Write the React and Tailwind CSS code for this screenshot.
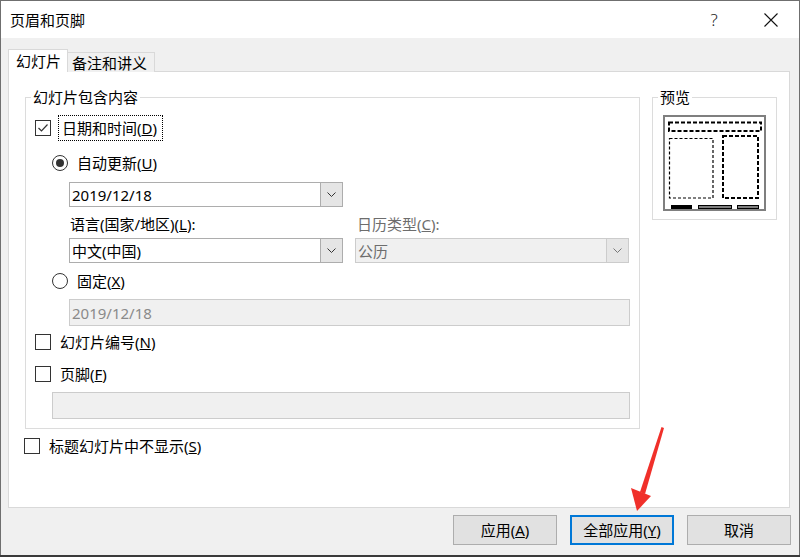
import React from "react";

// 页眉和页脚 对话框
function Check({ checked }) {
  return (
    <span className="w-[16px] h-[16px] border border-[#333] bg-white flex items-center justify-center shrink-0">
      {checked && (
        <svg width="12" height="12" viewBox="0 0 12 12">
          <polyline points="1.5,6 4.5,9 10.5,2.5" fill="none" stroke="#333" strokeWidth="1.2" />
        </svg>
      )}
    </span>
  );
}

function Radio({ checked }) {
  return (
    <span className="w-[16px] h-[16px] rounded-full border border-[#333] bg-white flex items-center justify-center shrink-0">
      {checked && <span className="w-[8px] h-[8px] rounded-full bg-[#333]" />}
    </span>
  );
}

function Chevron({ color = "#333" }) {
  return (
    <svg width="9" height="5" viewBox="0 0 9 5">
      <polyline points="0.5,0.5 4.5,4.5 8.5,0.5" fill="none" stroke={color} strokeWidth="1" />
    </svg>
  );
}

function Combo({ value, disabled }) {
  return (
    <div
      className={
        "w-[274px] h-[25px] border flex " +
        (disabled ? "bg-[#f0f0f0] border-[#cccccc] text-[#6d6d6d]" : "bg-white border-[#adadad]")
      }
    >
      <div className="flex-1 pl-[2px] flex items-center">{value}</div>
      <div
        className={
          "w-[22px] border-l flex items-center justify-center " +
          (disabled ? "bg-[#e6e6e6] border-[#cccccc]" : "bg-[#e5e5e5] border-[#adadad]")
        }
      >
        <Chevron color={disabled ? "#777" : "#333"} />
      </div>
    </div>
  );
}

function Preview() {
  return (
    <svg width="103" height="96" viewBox="0 0 103 96">
      <rect x="1" y="1" width="101" height="94" fill="#fff" stroke="#7f7f7f" strokeWidth="2" />
      <rect x="6" y="7.5" width="92" height="8.5" fill="none" stroke="#000" strokeWidth="2" strokeDasharray="4 2" />
      <rect x="6.5" y="23.5" width="43.5" height="59.5" fill="none" stroke="#000" strokeWidth="1.2" strokeDasharray="3 2" />
      <rect x="60" y="21" width="35" height="62" fill="none" stroke="#000" strokeWidth="2" strokeDasharray="4 2" />
      <rect x="8" y="90" width="21" height="4" fill="#000" />
      <rect x="35.5" y="90.5" width="33" height="3" fill="#7f7f7f" stroke="#000" strokeWidth="1" />
      <rect x="74.5" y="90.5" width="21" height="3" fill="#7f7f7f" stroke="#000" strokeWidth="1" />
    </svg>
  );
}

function Button({ children, focused }) {
  return (
    <button
      className={
        "w-[104px] h-[30px] bg-[#e1e1e1] flex items-center justify-center " +
        (focused ? "border-2 border-[#0078d7]" : "border border-[#adadad]")
      }
    >
      {children}
    </button>
  );
}

export default function App() {
  return (
    <div className="w-[800px] h-[557px] bg-[#3a3a3a] relative overflow-hidden font-['Noto_Sans','Noto_Sans_CJK_SC',sans-serif] text-[15px] leading-[20px] text-black">
      <div className="w-[800px] h-[555px] bg-[#f0f0f0] border-l border-r border-t border-[#6f6f6f] flex flex-col">
        {/* title bar */}
        <div className="h-[37px] bg-white flex items-center pl-[9px] shrink-0">
          <span className="flex-1">页眉和页脚</span>
          <span className="w-[20px] text-center text-[17px] font-light text-[#222] mr-[40px]">?</span>
          <svg width="14" height="14" viewBox="0 0 14 14" className="mr-[21px]">
            <path d="M0.5 0.5 L13.5 13.5 M13.5 0.5 L0.5 13.5" stroke="#111" strokeWidth="1.1" />
          </svg>
        </div>

        <div className="pl-[7px] pt-[12px] flex flex-col">
          {/* tabs */}
          <div className="h-[22px] flex items-end -mb-px relative z-10">
            <div className="w-[60px] h-[23px] bg-white border border-b-0 border-[#d9d9d9] pl-[7px] pt-[1px]">幻灯片</div>
            <div className="w-[87px] h-[20px] bg-[#f0f0f0] border border-l-0 border-b-0 border-[#d9d9d9] pl-[4px]">备注和讲义</div>
          </div>

          {/* panel */}
          <div className="w-[782px] h-[437px] bg-white border border-[#d9d9d9] pt-[15px] pl-[16px] flex flex-col">
            <div className="flex items-start gap-[12px]">
              <fieldset className="w-[615px] border border-[#dcdcdc]">
                <legend className="ml-[5px] px-[2px]">幻灯片包含内容</legend>

                <div className="pl-[9px] pb-[9px]">
                  <div className="h-[26px] mt-[8px] flex items-center">
                    <Check checked />
                    <span className="ml-[7px] h-[26px] w-[105px] border border-dotted border-black pl-[3px] flex items-center">
                      日期和时间(<span className="underline">D</span>)
                    </span>
                  </div>

                  <div className="h-[20px] mt-[12px] ml-[17px] flex items-center gap-[9px]">
                    <Radio checked />
                    <span>
                      自动更新(<span className="underline">U</span>)
                    </span>
                  </div>

                  <div className="mt-[9px] ml-[34px]">
                    <Combo value="2019/12/18" />
                  </div>

                  <div className="h-[20px] mt-[7px] ml-[34px] flex gap-[12px]">
                    <span className="w-[274px] pl-[1px]">
                      语言(国家/地区)(<span className="underline">L</span>):
                    </span>
                    <span className="w-[274px] pl-[2px] text-[#6d6d6d]">
                      日历类型(<span className="underline">C</span>):
                    </span>
                  </div>

                  <div className="mt-[4px] ml-[34px] flex gap-[12px]">
                    <Combo value="中文(中国)" />
                    <Combo value="公历" disabled />
                  </div>

                  <div className="h-[20px] mt-[8px] ml-[17px] flex items-center gap-[9px]">
                    <Radio />
                    <span>
                      固定(<span className="underline">X</span>)
                    </span>
                  </div>

                  <div className="w-[561px] h-[27px] mt-[8px] ml-[34px] bg-[#f0f0f0] border border-[#cccccc] pl-[2px] flex items-center text-[#8a8a8a]">
                    2019/12/18
                  </div>

                  <div className="h-[20px] mt-[6px] flex items-center gap-[9px]">
                    <Check />
                    <span>
                      幻灯片编号(<span className="underline">N</span>)
                    </span>
                  </div>

                  <div className="h-[20px] mt-[12px] flex items-center gap-[9px]">
                    <Check />
                    <span>
                      页脚(<span className="underline">F</span>)
                    </span>
                  </div>

                  <div className="w-[578px] h-[27px] mt-[8px] ml-[17px] bg-[#f0f0f0] border border-[#cccccc]" />
                </div>
              </fieldset>

              <fieldset className="w-[125px] border border-[#dcdcdc]">
                <legend className="ml-[5px] px-[2px]">预览</legend>
                <div className="pl-[10px] pb-[8px] pt-[8px]">
                  <Preview />
                </div>
              </fieldset>
            </div>

            <div className="h-[20px] mt-[7px] -ml-[1px] flex items-center gap-[9px]">
              <Check />
              <span>
                标题幻灯片中不显示(<span className="underline">S</span>)
              </span>
            </div>
          </div>

          {/* buttons */}
          <div className="w-[783px] mt-[7px] flex justify-end gap-[13px]">
            <Button>
              应用(<span className="underline">A</span>)
            </Button>
            <Button focused>
              全部应用(<span className="underline">Y</span>)
            </Button>
            <Button>取消</Button>
          </div>
        </div>
      </div>

      {/* red annotation arrow */}
      <svg className="absolute left-0 top-0 pointer-events-none" width="800" height="557">
        <polygon points="661.5,427 664,428 645,494 640,492" fill="#f0302a" />
        <polygon points="631,488 651,496 637,511" fill="#f0302a" />
      </svg>
    </div>
  );
}
